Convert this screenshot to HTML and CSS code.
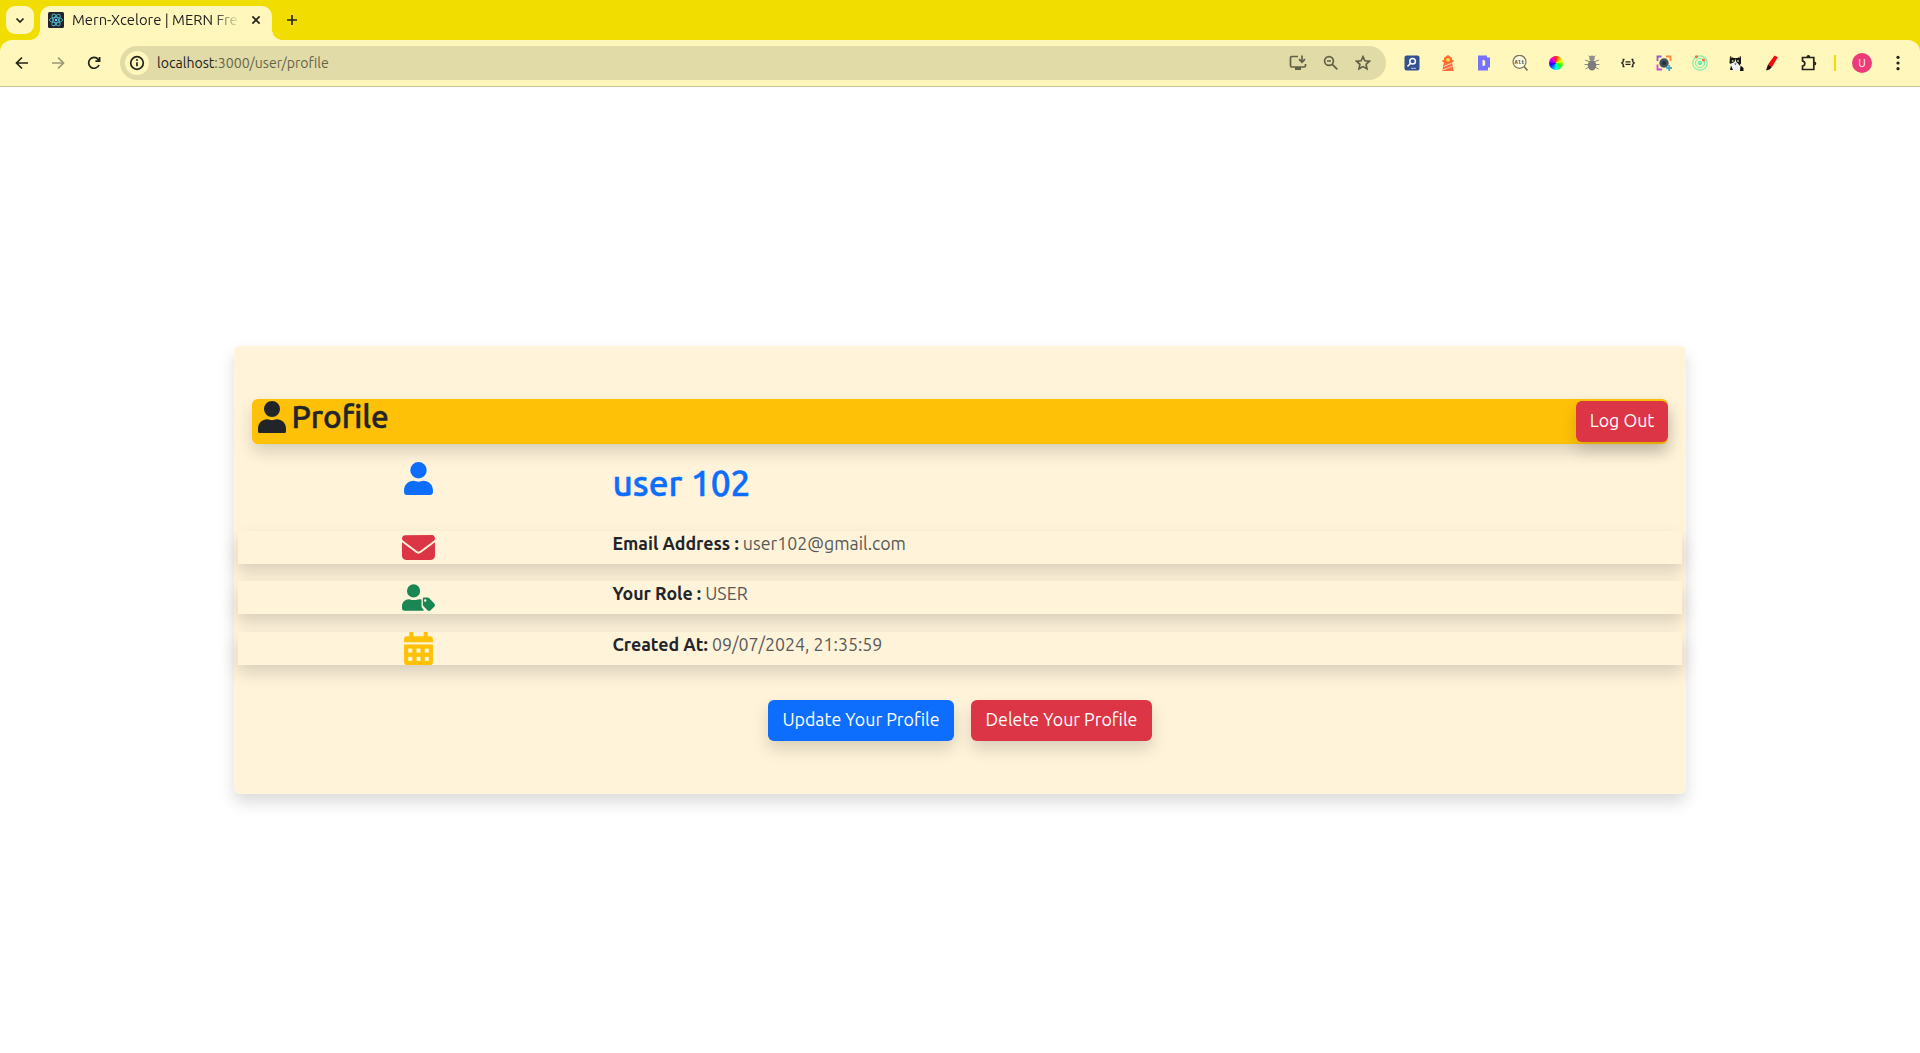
FILE: index.html
```html
<!DOCTYPE html>
<html lang="en"><head><meta charset="utf-8"><title>Mern-Xcelore | MERN Fresher</title>
<link rel="stylesheet" href="styles.css"></head>
<body>
<header class="browser">
 <div class="tabs">
  <div class="tab-search"><svg width="28" height="28" viewBox="0 0 28 28"><path d="M10.5 12.5l3.5 3.5 3.5-3.5" class="ln"/></svg></div>
  <div class="tab">
   <svg width="16" height="16" viewBox="0 0 16 16"><rect width="16" height="16" rx="1.5" fill="#20232a"/><g fill="none" stroke="#4fb6d0" stroke-width=".9"><ellipse cx="8" cy="8" rx="6.6" ry="2.6"/><ellipse cx="8" cy="8" rx="6.6" ry="2.6" transform="rotate(60 8 8)"/><ellipse cx="8" cy="8" rx="6.6" ry="2.6" transform="rotate(120 8 8)"/></g><circle cx="8" cy="8" r="1.2" fill="#61dafb"/></svg>
   <span class="tab-title">Mern-Xcelore | MERN Fre</span>
   <svg width="10" height="10" viewBox="0 0 10 10"><path d="M1.4 1.4l7.2 7.2M8.6 1.4L1.4 8.6" class="ln"/></svg>
  </div>
  <svg class="plus" width="12" height="12" viewBox="0 0 12 12"><path d="M6 1v10M1 6h10" class="ln"/></svg>
 </div>
 <div class="toolbar">
  <div class="nav">
   <svg width="14" height="14" viewBox="0 0 14 14"><path d="M13 7H2M7 1.5L1.5 7 7 12.5" class="ln"/></svg>
   <svg class="dim" width="14" height="14" viewBox="0 0 14 14"><path d="M1 7h11M7 1.5L12.5 7 7 12.5" class="ln"/></svg>
   <svg width="14" height="14" viewBox="0 0 14 14"><path d="M12 9A5.4 5.4 0 1 1 11.2 3.4L12.6 5M12.6 1v4.2H8.4" class="ln"/></svg>
  </div>
  <div class="address">
   <span class="info"><svg width="16" height="16" viewBox="0 0 16 16"><circle cx="8" cy="8" r="6.3" class="ln"/><path d="M8 7.3v4" class="ln"/><circle cx="8" cy="5" r="1" fill="#222"/></svg></span>
   <span class="url"><b>localhost</b>:3000/user/profile</span>
   <div class="actions">
    <svg width="18" height="18" viewBox="0 0 18 18"><path d="M9 2.5H2.8Q1.5 2.5 1.5 3.8v8Q1.5 13 2.8 13h12.4q1.3 0 1.3-1.2V10M13 1.5v6.3M10 5.2l3 3 3-3" class="ga"/><path d="M6 13h6v3H6z" fill="#626047"/></svg>
    <svg width="16" height="16" viewBox="0 0 16 16"><circle cx="6" cy="6" r="4.4" class="ga"/><path d="M9.3 9.3l5 5M4 6h4" class="ga"/></svg>
    <svg width="16" height="16" viewBox="0 0 16 16"><path d="M8 1.7l1.9 4.1 4.5.5-3.3 3 .9 4.5L8 11.6l-4 2.2.9-4.5-3.3-3 4.5-.5z" class="ga"/></svg>
   </div>
  </div>
  <div class="exts">
   <svg width="16" height="16" viewBox="0 0 16 16"><rect x=".5" y=".5" width="15" height="15" rx="2" fill="#34518f"/><circle cx="8.6" cy="6.2" r="2.8" fill="none" stroke="#fff" stroke-width="1.5"/><path d="M6.6 8.2L3.5 11.5" stroke="#fff" stroke-width="1.5"/><path d="M7 13.3h5" stroke="#b9c4dc"/></svg>
   <svg width="16" height="16" viewBox="0 0 16 16"><path d="M8 0l4 2.7V5h1.5v2H12l1.7 9H2.3L4 7H2.500V5H4V2.700z" fill="#ff6a35"/><circle cx="8" cy="4.8" r="1.9" fill="#ffe03c"/><path d="M4 11.5l7.5-3.2M3 15l9.500-4" stroke="#ffc6ad" stroke-width="1.2"/></svg>
   <svg width="16" height="16" viewBox="0 0 16 16"><path fill-rule="evenodd" d="M2 .5h9v2h3v10h-2v3H2zM6.5 5v6H8l1.200-1V6L8 5z" fill="#7771ff"/></svg>
   <svg width="16" height="16" viewBox="0 0 16 16"><circle cx="7.5" cy="6.8" r="6.5" fill="#fffbe0" stroke="#77745f" stroke-width="1.2"/><path d="M12 11.5l3.5 4" stroke="#77745f" stroke-width="1.7"/><text x="7.5" y="9" text-anchor="middle" class="alt">Alt</text></svg>
   <span class="wheel"></span>
   <svg width="16" height="16" viewBox="0 0 16 16"><path d="M5 6.5L1 5M11 6.5L15 5M4 9.5H.5M12 9.5h3.5M5 12l-3.5 2M11 12l3.5 2M6 2L4.5.7M10 2L11.5.7" stroke="#858585"/><ellipse cx="8" cy="10.2" rx="4.2" ry="5.3" fill="#7c7c7c"/><circle cx="8" cy="3.2" r="2.7" fill="#8f8f8f"/></svg>
   <svg width="16" height="16" viewBox="0 0 16 16"><path d="M4.5 4.5H3.2v2.3L1.8 8l1.400 1.200v2.300h1.300M11.500 4.500h1.300v2.300L14.200 8l-1.400 1.200v2.300h-1.300M5.500 6.800h5M5.500 9.300h5" fill="none" stroke="#24221d" stroke-width="1.3"/></svg>
   <svg width="16" height="16" viewBox="0 0 16 16"><g fill="none" stroke-width="1.8"><path d="M1.5 6V1.5H5.5" stroke="#8b5cce"/><path d="M1.5 9.5v5H6" stroke="#d04bd0"/><path d="M10 1.5h4.5V6" stroke="#ff8a40"/><path d="M13.2 10v6M10.2 13h6" stroke="#3eabd2"/></g><circle cx="8" cy="8" r="4.7" fill="#45505b"/><circle cx="8" cy="8" r="2" fill="#26303f"/></svg>
   <svg width="16" height="16" viewBox="0 0 16 16"><g fill="none" stroke="#78eeb0" stroke-width="1.2"><circle cx="8" cy="8" r="7.2"/><circle cx="8" cy="8" r="4.5"/></g><circle cx="8" cy="8" r="2.3" fill="#6eebad"/><circle cx="4.4" cy="1.8" r="1.5" fill="#ff6944"/><circle cx="11.5" cy="5" r="1.6" fill="#ff6944"/></svg>
   <svg width="16" height="16" viewBox="0 0 16 16"><path d="M2 1l3.500 2h4L13 1v7.500L11 11H4L1.500 8z" fill="#171717"/><path d="M7.200 3.500L6.500 7 2 9l1 4 2 2.500h8L10.500 9 8.300 7z" fill="#f1f1f1"/><path d="M2.500 2l1.500 1M12.500 2L11 3" stroke="#d5893d"/><circle cx="4.700" cy="6" r="1" fill="#c3bd75"/><circle cx="10" cy="6" r="1" fill="#c3bd75"/><path d="M6.300 8.500h2.200l-1.100 1.500z" fill="#222"/><path d="M3 10.500l2 4.500H2zM12.500 10.500l3 2.500v3h-3.500z" fill="#111"/></svg>
   <svg width="16" height="16" viewBox="0 0 16 16"><path d="M4 9.500L10.500.5l3.300 1.800L8 12z" fill="#f20d0d"/><path d="M4 9.500L8 12l-2.500 2.500L2 15.500z" fill="#2a0c0c"/></svg>
   <svg width="18" height="18" viewBox="0 0 18 18"><path d="M2.500 3.500h11.300v12H2.500v-3.300q2.300-.5 2.300-2.700T2.500 6.800z" class="ln"/><path d="M6.500 3q0-2 1.900-2t1.900 2zM14.300 7.600q2 0 2 1.900t-2 1.900z" fill="#24241c"/></svg>
  </div>
  <i class="sep"></i><span class="avatar">U</span>
  <svg class="dots" width="4" height="16" viewBox="0 0 4 16"><circle cx="2" cy="2.3" r="1.6"/><circle cx="2" cy="8" r="1.6"/><circle cx="2" cy="13.7" r="1.6"/></svg>
 </div>
</header>
<main class="page">
 <section class="card">
  <div class="card-head">
   <h2><svg width="28" height="32" viewBox="0 0 448 512"><path d="M224 256A128 128 0 1 0 224 0a128 128 0 1 0 0 256zm-74 36C67 292 0 354 0 440v42c0 20 10 30 30 30h388c20 0 30-10 30-30v-42c0-86-67-148-150-148-25 0-43 15-74 15s-49-15-74-15z"/></svg><span>Profile</span></h2>
   <button class="btn red logout">Log Out</button>
  </div>
  <div class="row name"><div class="icon blue"><svg width="29" height="33" viewBox="0 0 448 512"><path d="M224 256A128 128 0 1 0 224 0a128 128 0 1 0 0 256zm-74 36C67 292 0 354 0 440v28c0 25 18 44 44 44h360c26 0 44-19 44-44v-28c0-86-67-148-150-148-25 0-43 15-74 15s-49-15-74-15z"/></svg></div><h1>user 102</h1></div>
  <div class="row line"><div class="icon crimson"><svg width="33" height="33" viewBox="0 0 512 512"><path d="M48 64C21.500 64 0 85.500 0 112c0 15.100 7.100 29.300 19.200 38.400l217.600 163.200c11.400 8.500 27 8.500 38.400 0l217.600-163.200c12.100-9.100 19.200-23.300 19.200-38.400 0-26.500-21.500-48-48-48zM0 176v208c0 35.300 28.700 64 64 64h384c35.300 0 64-28.700 64-64V176L294.400 339.200c-22.800 17.100-54 17.100-76.800 0z"/></svg></div><p><b>Email Address :</b><span>user102@gmail.com</span></p></div>
  <div class="row line"><div class="icon green"><svg width="33" height="27" viewBox="0 0 640 512"><path d="M224 256A128 128 0 1 0 224 0a128 128 0 1 0 0 256zm-90 32C60 288 0 348 0 422v42c0 27 21 48 48 48h352c10 0 20-3 28-8l-22-24c-18-18-28-42-28-68v-117c-14-5-28-7-42-7-31 0-52 16-112 16s-59-16-90-16z"/><path fill-rule="evenodd" d="M625 372L530 271c-9-9-21-14-34-14h-68c-13 0-24 11-24 24v112c0 13 5 25 14 34l75 75c19 19 43 19 62 0l70-68c19-19 19-43 0-62zM450 336a24 24 0 1 1 0-48 24 24 0 0 1 0 48z"/></svg></div><p><b>Your Role :</b><span>USER</span></p></div>
  <div class="row line last"><div class="icon yellow"><svg width="29" height="33" viewBox="0 0 448 512"><path fill-rule="evenodd" d="M96 0h32q16 0 16 16v48h160V16q0-16 16-16h32q16 0 16 16v48h32q48 0 48 48v48H0v-48q0-48 48-48h32V16Q80 0 96 0zM0 192h448v272q0 48-48 48H48q-48 0-48-48zm64 76v40q0 12 12 12h40q12 0 12-12v-40q0-12-12-12H76q-12 0-12 12zm128 0v40q0 12 12 12h40q12 0 12-12v-40q0-12-12-12h-40q-12 0-12 12zm128 0v40q0 12 12 12h40q12 0 12-12v-40q0-12-12-12h-40q-12 0-12 12zM64 396v40q0 12 12 12h40q12 0 12-12v-40q0-12-12-12H76q-12 0-12 12zm128 0v40q0 12 12 12h40q12 0 12-12v-40q0-12-12-12h-40q-12 0-12 12zm128 0v40q0 12 12 12h40q12 0 12-12v-40q0-12-12-12h-40q-12 0-12 12z"/></svg></div><p><b>Created At:</b><span>09/07/2024, 21:35:59</span></p></div>
  <div class="buttons"><button class="btn primary update">Update Your Profile</button><button class="btn red delete">Delete Your Profile</button></div>
 </section>
</main>
</body></html>
```
FILE: styles.css
```css
*{box-sizing:border-box}
body{margin:0;height:1053px;overflow:hidden;background:#fff;color:#212529;font-family:Ubuntu,"Noto Sans",sans-serif;display:flex;flex-direction:column}
svg{display:block;flex:none}
h1,h2,p{margin:0}
.ln{fill:none;stroke:#24241c;stroke-width:1.7}
.ga{fill:none;stroke:#626047;stroke-width:1.7}
.browser{flex:none;background:#f2dd00}
.tabs{height:40px;display:flex;padding:6px 0 0 6px}
.tab-search{width:28px;height:28px;border-radius:9px;background:#fff7bb;margin-right:6px}
.tab{position:relative;width:232px;height:34px;border-radius:10px 10px 0 0;background:#fff7bb;display:flex;align-items:center;padding:0 11px 6px 8px}
.tab::before,.tab::after{content:"";position:absolute;bottom:0;width:10px;height:10px;background:radial-gradient(circle at 0 0,transparent 9.5px,#fff7bb 10px)}
.tab::before{left:-10px}
.tab::after{right:-10px;background:radial-gradient(circle at 100% 0,transparent 9.5px,#fff7bb 10px)}
.tab-title{width:168px;margin:0 11px 0 8px;white-space:nowrap;overflow:hidden;font-size:14.8px;line-height:20px;color:#222;-webkit-mask-image:linear-gradient(90deg,#000 84%,transparent)}
.plus{margin:8px 0 0 14px}
.toolbar{height:47px;background:#fff7bb;border-radius:12px 12px 0 0;border-bottom:1px solid #cbc696;display:flex;align-items:center;padding:0 20px 0 15px}
.nav{display:flex;gap:22px;width:105px}
.dim{opacity:.45}
.address{width:1266px;height:34px;border-radius:17px;background:#e1dba7;display:flex;align-items:center;padding:0 15.5px 0 5px}
.info{width:24px;height:24px;border-radius:50%;background:#fff7bb;display:grid;place-items:center}
.url{margin-left:8px;font-size:14.1px;color:#66634b}
.url b{font-weight:400;color:#222}
.actions{display:flex;gap:16px;margin-left:auto;align-items:center}
.exts{display:flex;gap:20px;margin-left:18px;align-items:center}
.alt{font:700 5.5px "Liberation Mono",monospace;fill:#444}
.wheel{width:14px;height:14px;margin:0 1px;border-radius:50%;background:conic-gradient(#f20,#fa0,#ef0,#3f0,#0f6,#0ff,#08f,#20f,#a0f,#f0c,#f20)}
.sep{width:2px;height:16px;background:#f2dd00;margin-left:16px}
.avatar{width:20px;height:20px;border-radius:50%;background:#ec3b78;color:#fff;font-size:11px;line-height:20px;text-align:center;margin-left:16px}
.dots{margin-left:auto;fill:#222}
.page{flex:1;padding-top:259px}
.card{width:1452px;height:448px;margin:0 auto;border-radius:6px;background:#fff3da;padding:53px 4px 0;box-shadow:0 8px 16px rgba(0,0,0,.15)}
.card-head{height:45px;margin:0 14px;background:#ffc107;border-radius:6px;box-shadow:0 8px 16px rgba(0,0,0,.15);display:flex;justify-content:space-between;align-items:center}
.card-head h2{display:flex;align-items:center;gap:6px;padding-left:6px;height:36px;align-self:flex-start;font-size:31.5px;font-weight:500;line-height:36px;fill:#212529;-webkit-text-stroke:.5px #212529}
.card-head h2 svg{margin-left:-.5px}
.btn{height:41px;padding:0 0 2px;border:0;border-radius:6px;color:#fff;font:17.8px/39px Ubuntu,"Noto Sans",sans-serif;white-space:nowrap;box-shadow:0 8px 16px rgba(0,0,0,.15)}
.red{background:#dc3545}
.primary{background:#0d6efd}
.logout{width:92px}
.row{display:flex}
.icon{width:361px;flex:none;display:flex;justify-content:center;align-items:center}
.name{height:87px;align-items:flex-start;padding-top:18px}
.name h1{font-size:35.3px;font-weight:500;line-height:42px;color:#0d6efd;-webkit-text-stroke:.5px #0d6efd}
.line{height:33px;margin-bottom:17px;background:#fff3da;box-shadow:0 8px 16px rgba(0,0,0,.15)}
.line+.last{margin-top:18px;margin-bottom:0}
.line p{display:flex;gap:4px;font-size:17.75px;line-height:25px}
.line p span{color:#585a58}
.blue{fill:#0d6efd}.crimson{fill:#dc3545}.green{fill:#198754}.yellow{fill:#ffc107}
.row>.icon+*{margin-left:13.5px}
.buttons{display:flex;justify-content:center;gap:17px;margin-top:35px}
.update{width:186px}.delete{width:181px}
```
